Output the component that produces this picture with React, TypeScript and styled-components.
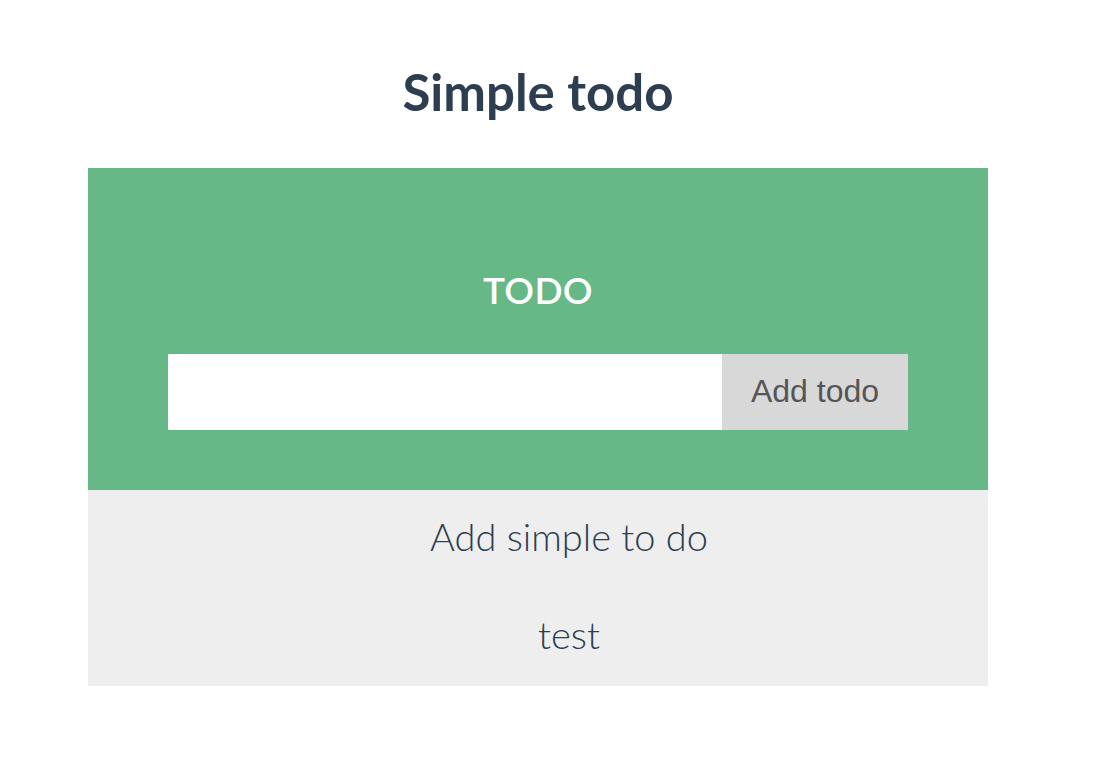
import React from "react";
import styled, { createGlobalStyle } from "styled-components";

const Global = createGlobalStyle`
  html, body { margin: 0; padding: 0; background: #ffffff; }
  body { font-family: Lato, "Noto Sans", Helvetica, Arial, sans-serif; color: #2c3e50; }
`;

const Page = styled.div`
  width: 900px;
  margin-left: 88px;
  padding-top: 68px;
`;

const Title = styled.h1`
  margin: 0 0 52px 0;
  height: 48px;
  font-size: 51px;
  line-height: 48px;
  font-weight: 700;
  text-align: center;
  color: #2c3e50;
`;

const Panel = styled.section`
  background: #66b886;
  padding: 100px 80px 60px 80px;
  display: flex;
  flex-direction: column;
  align-items: stretch;
`;

const PanelTitle = styled.h2`
  margin: 0 0 42px 0;
  height: 44px;
  font-size: 37px;
  line-height: 44px;
  font-weight: 600;
  text-align: center;
  color: #ffffff;
  letter-spacing: 0.3px;
`;

const Form = styled.form`
  display: flex;
  height: 76px;
  margin: 0;
`;

const Input = styled.input`
  flex: 1;
  border: none;
  outline: none;
  background: #ffffff;
  padding: 0 16px;
  font-size: 28px;
  font-family: "Liberation Sans", Arial, sans-serif;
`;

const Button = styled.button`
  width: 186px;
  border: none;
  background: #d8d8d8;
  color: #555555;
  font-family: "Liberation Sans", Arial, sans-serif;
  font-size: 32px;
  cursor: pointer;
  padding: 0 0 2px 0;
`;

const List = styled.ul`
  list-style: none;
  margin: 0;
  padding: 0 0 0 62px;
  background: #eeeeee;
`;

const Item = styled.li`
  height: 98px;
  display: flex;
  align-items: center;
  justify-content: center;
  padding-bottom: 6px;
  box-sizing: border-box;
  font-size: 38px;
  font-weight: 300;
  color: #2c3e50;
`;

const todos = ["Add simple to do", "test"];

export default function App() {
  return (
    <>
      <Global />
      <Page>
        <Title>Simple todo</Title>
        <Panel>
          <PanelTitle>TODO</PanelTitle>
          <Form onSubmit={(e) => e.preventDefault()}>
            <Input type="text" />
            <Button type="submit">Add todo</Button>
          </Form>
        </Panel>
        <List>
          {todos.map((t) => (
            <Item key={t}>{t}</Item>
          ))}
        </List>
      </Page>
    </>
  );
}
